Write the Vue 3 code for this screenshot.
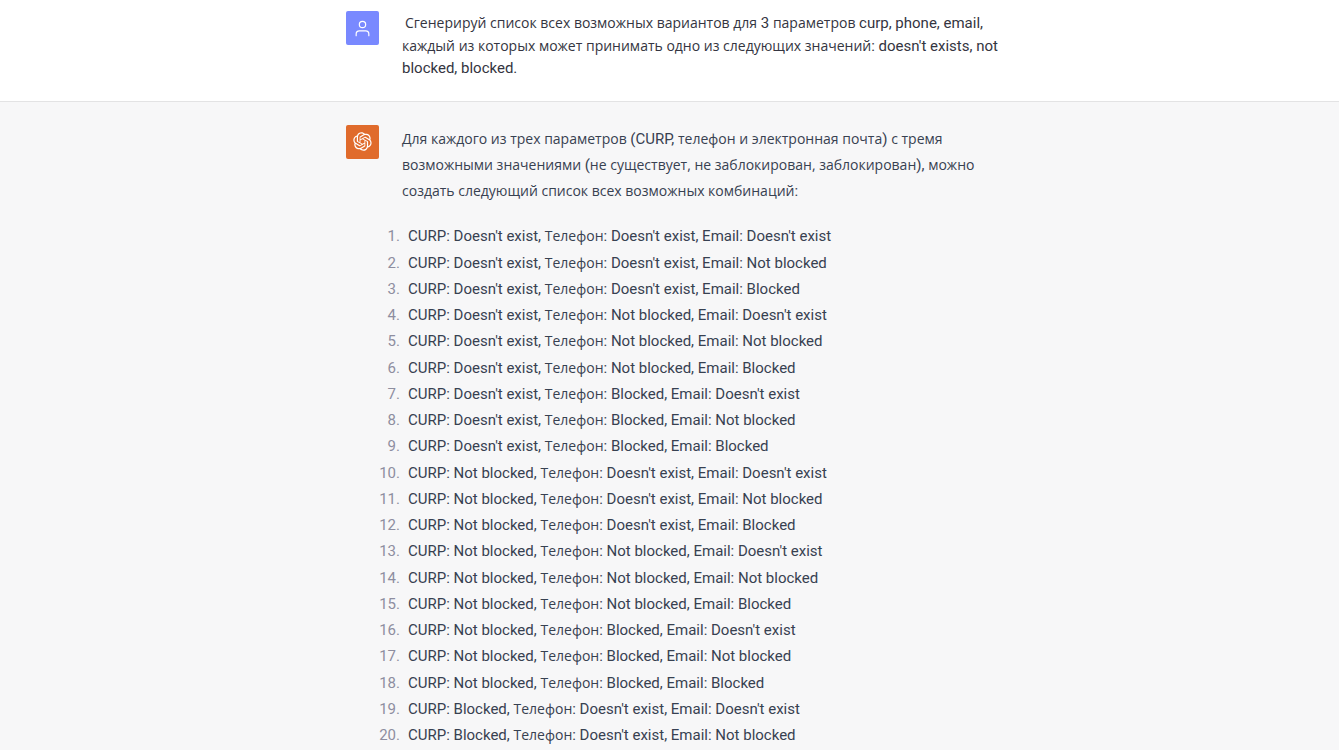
<script setup>
const question = [
  'Сгенерируй список всех возможных вариантов для 3 параметров curp, phone, email,',
  'каждый из которых может принимать одно из следующих значений: doesn\'t exists, not',
  'blocked, blocked.',
]

const answer = [
  'Для каждого из трех параметров (CURP, телефон и электронная почта) с тремя',
  'возможными значениями (не существует, не заблокирован, заблокирован), можно',
  'создать следующий список всех возможных комбинаций:',
]

const states = ["Doesn't exist", 'Not blocked', 'Blocked']
const combos = []
for (const curp of states) {
  for (const phone of states) {
    for (const email of states) combos.push({ curp, phone, email })
  }
}
const visible = combos.slice(0, 20)

// Splits a line into Cyrillic and Latin runs so that each gets its own typeface.
function runs(line) {
  return line
    .split(/([А-Яа-я][А-Яа-я ,]*)/)
    .filter(Boolean)
    .map((text) => ({ text, cyr: /[А-Яа-я]/.test(text) }))
}
</script>

<template>
  <main class="chat">
    <section class="turn user">
      <div class="inner">
        <div class="avatar person">
          <svg viewBox="0 0 24 24" width="19" height="19" fill="none" stroke="currentColor" stroke-width="1.5" stroke-linecap="round" stroke-linejoin="round" aria-hidden="true">
            <path d="M20 21v-2a4 4 0 0 0-4-4H8a4 4 0 0 0-4 4v2" />
            <circle cx="12" cy="7" r="4" />
          </svg>
        </div>
        <p class="text question">
          <span v-for="(line, i) in question" :key="i" class="line" :class="{ lead: i === 0 }"><span v-for="(run, j) in runs(line)" :key="j" :class="{ cyr: run.cyr }">{{ run.text }}</span></span>
        </p>
      </div>
    </section>
    <section class="turn assistant">
      <div class="inner">
        <div class="avatar bot">
          <svg viewBox="0 0 41 41" width="19" height="19" fill="currentColor" aria-hidden="true">
            <path d="M37.5324 16.8707C37.9808 15.5241 38.1363 14.0974 37.9886 12.6859C37.8409 11.2744 37.3934 9.91076 36.676 8.68622C35.6126 6.83404 33.9882 5.3676 32.0373 4.4985C30.0864 3.62941 27.9098 3.40259 25.8215 3.85078C24.8796 2.7893 23.7219 1.94125 22.4257 1.36341C21.1295 0.785575 19.7249 0.491269 18.3058 0.500197C16.1708 0.495044 14.0893 1.16803 12.3614 2.42214C10.6335 3.67624 9.34853 5.44666 8.6917 7.47815C7.30085 7.76286 5.98686 8.3414 4.8377 9.17505C3.68854 10.0087 2.73073 11.0782 2.02839 12.312C0.956464 14.1591 0.498905 16.2988 0.721698 18.4228C0.944492 20.5467 1.83612 22.5449 3.268 24.1293C2.81966 25.4759 2.66413 26.9026 2.81182 28.3141C2.95951 29.7256 3.40701 31.0892 4.12437 32.3138C5.18791 34.1659 6.8123 35.6322 8.76321 36.5013C10.7141 37.3704 12.8907 37.5973 14.9789 37.1492C15.9208 38.2107 17.0786 39.0587 18.3747 39.6366C19.6709 40.2144 21.0755 40.5087 22.4946 40.4998C24.6307 40.5054 26.7133 39.8321 28.4418 38.5772C30.1704 37.3223 31.4556 35.5506 32.1119 33.5179C33.5027 33.2332 34.8167 32.6547 35.9659 31.821C37.115 30.9874 38.0728 29.9178 38.7752 28.684C39.8458 26.8371 40.3023 24.6979 40.0789 22.5748C39.8556 20.4517 38.9639 18.4544 37.5324 16.8707ZM22.4978 37.8849C20.7443 37.8874 19.0459 37.2733 17.6994 36.1501C17.7601 36.117 17.8666 36.0586 17.936 36.0161L25.9004 31.4156C26.1003 31.3019 26.2663 31.137 26.3813 30.9378C26.4964 30.7386 26.5563 30.5124 26.5549 30.2825V19.0542L29.9213 20.998C29.9389 21.0068 29.9541 21.0198 29.9656 21.0359C29.977 21.052 29.9842 21.0707 29.9867 21.0902V30.3889C29.9842 32.375 29.1946 34.2791 27.7909 35.6841C26.3872 37.0892 24.4838 37.8806 22.4978 37.8849ZM6.39227 31.0064C5.51397 29.4888 5.19742 27.7107 5.49804 25.9832C5.55718 26.0187 5.66048 26.0818 5.73461 26.1244L13.699 30.7248C13.8975 30.8408 14.1233 30.902 14.3532 30.902C14.583 30.902 14.8088 30.8408 15.0073 30.7248L24.731 25.1103V28.9979C24.7321 29.0177 24.7283 29.0376 24.7199 29.0556C24.7115 29.0736 24.6988 29.0893 24.6829 29.1012L16.6317 33.7497C14.9096 34.7416 12.8643 35.0097 10.9447 34.4954C9.02506 33.9811 7.38785 32.7263 6.39227 31.0064ZM4.29707 13.6194C5.17156 12.0998 6.55279 10.9364 8.19885 10.3327C8.19885 10.4013 8.19491 10.5228 8.19491 10.6071V19.808C8.19351 20.0378 8.25334 20.2638 8.36823 20.4629C8.48312 20.6619 8.64893 20.8267 8.84863 20.9404L18.5723 26.5542L15.206 28.4979C15.1894 28.5089 15.1703 28.5155 15.1505 28.5173C15.1307 28.5191 15.1107 28.516 15.0924 28.5082L7.04046 23.8557C5.32135 22.8601 4.06716 21.2235 3.55289 19.3046C3.03862 17.3858 3.30624 15.3413 4.29707 13.6194ZM31.955 20.0556L22.2312 14.4411L25.5976 12.4981C25.6142 12.4872 25.6333 12.4805 25.6531 12.4787C25.6729 12.4769 25.6928 12.4801 25.7111 12.4879L33.7631 17.1364C34.9967 17.849 36.0017 18.8982 36.6606 20.1613C37.3194 21.4244 37.6047 22.849 37.4832 24.2684C37.3617 25.6878 36.8382 27.0432 35.9743 28.1759C35.1103 29.3086 33.9415 30.1717 32.6047 30.6641C32.6047 30.5947 32.6047 30.4733 32.6047 30.3889V21.188C32.6066 20.9586 32.5474 20.7328 32.4332 20.5338C32.319 20.3348 32.154 20.1698 31.955 20.0556ZM35.3055 15.0128C35.2464 14.9765 35.1431 14.9142 35.069 14.8717L27.1045 10.2712C26.906 10.1554 26.6803 10.0943 26.4504 10.0943C26.2206 10.0943 25.9948 10.1554 25.7963 10.2712L16.0726 15.8858V11.9982C16.0715 11.9783 16.0753 11.9585 16.0837 11.9405C16.0921 11.9225 16.1048 11.9068 16.1207 11.8949L24.1719 7.25025C25.4053 6.53903 26.8158 6.19376 28.2383 6.25482C29.6608 6.31589 31.0364 6.78077 32.2044 7.59508C33.3723 8.40939 34.2842 9.53945 34.8334 10.8531C35.3826 12.1667 35.5464 13.6095 35.3055 15.0128ZM14.2424 21.9419L10.8752 19.9981C10.8576 19.9893 10.8423 19.9763 10.8309 19.9602C10.8195 19.9441 10.8122 19.9254 10.8098 19.9058V10.6071C10.8107 9.18295 11.2173 7.78848 11.9819 6.58696C12.7466 5.38544 13.8377 4.42659 15.1275 3.82264C16.4173 3.21869 17.8524 2.99464 19.2649 3.1767C20.6775 3.35876 22.0089 3.93941 23.1034 4.85067C23.0427 4.88379 22.937 4.94215 22.8668 4.98473L14.9024 9.58517C14.7025 9.69878 14.5366 9.86356 14.4215 10.0626C14.3065 10.2616 14.2466 10.4877 14.2479 10.7175L14.2424 21.9419ZM16.071 17.9991L20.4018 15.4978L24.7325 17.9975V22.9985L20.4018 25.4983L16.071 22.9985V17.9991Z" />
          </svg>
        </div>
        <div class="text reply">
          <p class="intro">
            <span v-for="(line, i) in answer" :key="i" class="line"><span v-for="(run, j) in runs(line)" :key="j" :class="{ cyr: run.cyr }">{{ run.text }}</span></span>
          </p>
          <ol class="combos">
            <li v-for="(c, i) in visible" :key="i">
              <span class="num">{{ i + 1 }}.</span>
              <span>CURP: {{ c.curp }}, <span class="cyr">Телефон</span>: {{ c.phone }}, Email: {{ c.email }}</span>
            </li>
          </ol>
        </div>
      </div>
    </section>
  </main>
</template>

<style>
body {
  margin: 0;
  background: #f7f7f8;
}
</style>

<style scoped>
.chat {
  display: flex;
  flex-direction: column;
  min-height: 100vh;
  font-family: Roboto, "Liberation Sans", sans-serif;
  font-size: 15px;
}
.turn {
  display: flex;
  justify-content: center;
}
.user {
  padding: 11px 0 21px;
  background: #fff;
  color: #343541;
  border-bottom: 1px solid #e3e3e4;
}
.assistant {
  flex: 1;
  padding-top: 23px;
  background: #f7f7f8;
  color: #374151;
}
.inner {
  display: flex;
  gap: 23px;
  width: 100%;
  max-width: 647px;
}
.avatar {
  display: flex;
  flex: none;
  align-items: center;
  justify-content: center;
  width: 33px;
  height: 34px;
  border-radius: 2px;
  color: #fff;
}
.person {
  background: #7989ff;
}
.bot {
  background: #e06b2c;
}
.text {
  flex: 1;
  min-width: 0;
  margin: 0;
  padding-top: 1px;
}
.question {
  line-height: 1.5;
}
.reply {
  line-height: 1.75;
}
.line {
  display: block;
  white-space: nowrap;
}
.lead {
  padding-left: 3px;
}
.cyr {
  font-family: "Open Sans", "Noto Sans", sans-serif;
  font-size: 14px;
  line-height: 1;
}
.intro {
  margin: 0 0 19px;
}
.combos {
  margin: 0 0 0 -26px;
  padding: 0;
  list-style: none;
}
.combos li {
  display: flex;
  gap: 8px;
  white-space: nowrap;
}
.num {
  width: 24px;
  text-align: right;
  color: #8e8ea0;
}
</style>
